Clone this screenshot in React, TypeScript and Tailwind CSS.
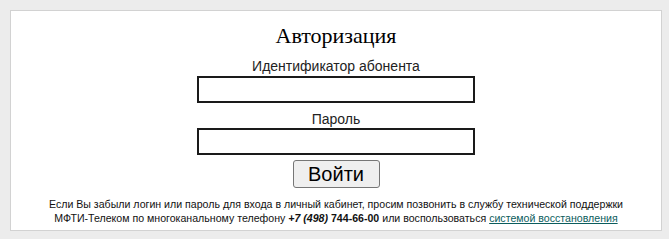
import React from "react";

const AuthForm: React.FC = () => {
  return (
    <div className="w-[669px] h-[239px] bg-[#ececec] pl-[10px] pr-[7px] pt-[10px] pb-[8px] font-['Liberation_Sans',Arial,sans-serif]">
      <div className="h-[221px] bg-white border border-[#d2d2d2] flex flex-col items-center pt-[12px]">
        <h1 className="font-['Liberation_Serif','Times_New_Roman',serif] text-[22px] leading-[25px] text-black">
          Авторизация
        </h1>
        <form className="flex flex-col items-center mt-[10px]">
          <label className="text-[14px] leading-[16px] text-[#222]">
            Идентификатор абонента
          </label>
          <input
            type="text"
            className="mt-[2px] w-[278px] h-[27px] border-2 border-[#1a1a1a] bg-white outline-none"
          />
          <label className="mt-[8px] text-[14px] leading-[16px] text-[#222]">
            Пароль
          </label>
          <input
            type="password"
            className="mt-[1px] w-[278px] h-[27px] border-2 border-[#1a1a1a] bg-white outline-none"
          />
          <button
            type="button"
            className="mt-[5px] w-[87px] h-[28px] rounded-[3px] border border-[#767676] bg-[#efefef] text-[20px] leading-[22px] text-black"
          >
            Войти
          </button>
        </form>
        <p className="mt-[9px] text-[10.6px] leading-[14px] text-[#111] text-center">
          Если Вы забыли логин или пароль для входа в личный кабинет, просим
          позвонить в службу технической поддержки
          <br />
          МФТИ-Телеком по многоканальному телефону{" "}
          <b>
            <i>+7 (498)</i> 744-66-00
          </b>{" "}
          или воспользоваться{" "}
          <a href="#" className="text-[#0b5d5d] underline">
            системой восстановления
          </a>
        </p>
      </div>
    </div>
  );
};

export default function App() {
  return <AuthForm />;
}
